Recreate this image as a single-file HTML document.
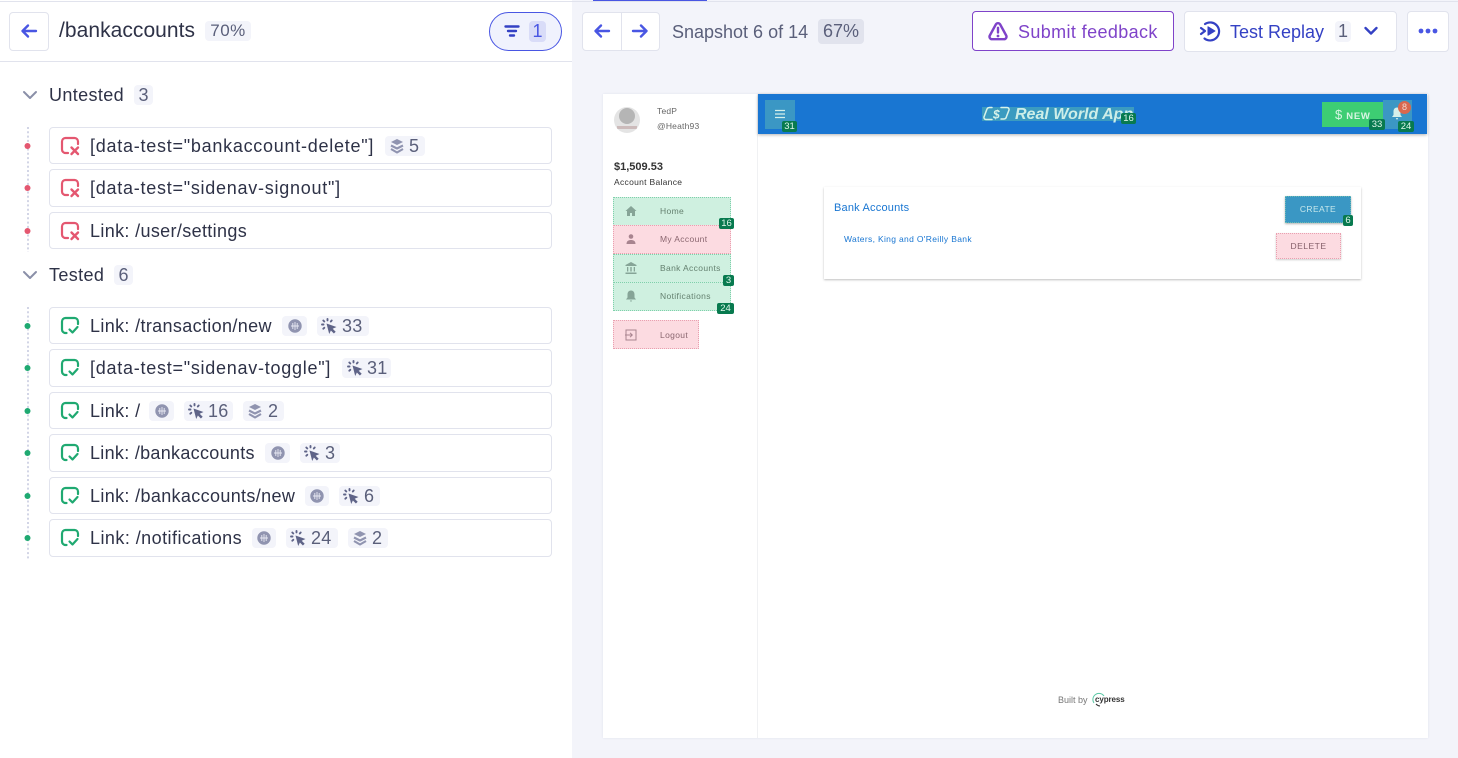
<!DOCTYPE html>
<html><head><meta charset="utf-8"><style>
html,body{margin:0;padding:0;width:1458px;height:758px;overflow:hidden;background:#fff;font-family:"Liberation Sans",sans-serif}
div,span,svg{position:absolute;box-sizing:border-box}
.t{white-space:nowrap;line-height:20px}
.row{left:49px;width:503px;border:1px solid #e1e3ed;border-radius:4px;background:#fff}
.rt{left:90px;font-size:18px;letter-spacing:.35px;color:#2e3247;white-space:nowrap;line-height:20px}
.br{letter-spacing:.74px}
.b{height:20px;background:#f3f4fa;border-radius:4px}
.bn{font-size:18px;color:#5a5f7a;line-height:20px;letter-spacing:.3px;white-space:nowrap;top:0}
.g{background:#087a4f;color:#dff7ea;font-size:9.500px;line-height:11px;height:11px;text-align:center;border-radius:2px;z-index:5}
.mi{left:613px;width:118px;border:1px dotted #7fd0ab;background:#cff0e0;font-size:8.500px;letter-spacing:.35px;color:#64806f;line-height:26px}
.mp{border-color:#e9a0b0;background:#fcdbe1;color:#8a666f}
.ml{left:46px;white-space:nowrap;top:0}
</style></head><body>
<svg width="0" height="0" style="position:absolute"><defs>
<symbol id="x" viewBox="0 0 20 20"><path d="M8 17H5.500A3.500 3.500 0 0 1 2 13.500V5.500A3.500 3.500 0 0 1 5.500 2h9A3.500 3.500 0 0 1 18 5.500V8" fill="none" stroke="#e45770" stroke-width="2.200" stroke-linecap="round"/><path d="M11.500 11.500l6.500 6.500M18 11.500L11.500 18" fill="none" stroke="#e45770" stroke-width="2.400" stroke-linecap="round"/></symbol>
<symbol id="c" viewBox="0 0 20 20"><path d="M6.500 17H5.500A3.500 3.500 0 0 1 2 13.500V5.500A3.500 3.500 0 0 1 5.500 2h9A3.500 3.500 0 0 1 18 5.500V8" fill="none" stroke="#1fa971" stroke-width="2.200" stroke-linecap="round"/><path d="M9.500 13.500l3 3 5-5.500" fill="none" stroke="#1fa971" stroke-width="2.200" stroke-linecap="round" stroke-linejoin="round"/></symbol>
<symbol id="gl" viewBox="0 0 14 14"><circle cx="7" cy="7" r="6.700" fill="#9094b0"/><path d="M3 7h8M7 3v8M4.800 4v6M9.200 4v6" stroke="#e8e9f3" stroke-width=".9" fill="none"/></symbol>
<symbol id="cu" viewBox="0 0 16 16"><path d="M5.500 5.500l10 3.500-3.800 1.700 3 3-1.800 1.800-3-3L8.200 16z" fill="#5f6488"/><path d="M6.500 1v1.400M2.300 2.500l1 1M10.700 2.500l-.9 1M1 6.500h1.500M2.300 10.700l1-.9" stroke="#5f6488" stroke-width="1.900" stroke-linecap="round" fill="none"/></symbol>
<symbol id="la" viewBox="0 0 14 16"><path d="M7 1l6 3-6 3-6-3z" fill="#9094b0"/><path d="M1 7.500l6 3 6-3M1 11l6 3.500 6-3.500" stroke="#9094b0" stroke-width="2.100" fill="none" stroke-linejoin="round"/></symbol>
</defs></svg>

<!-- LEFT -->
<div style="left:0;top:0;width:572px;height:758px;background:#fff"></div>
<div style="left:0;top:1px;width:1458px;height:1px;background:#e1e3ed"></div>
<div style="left:0;top:61px;width:572px;height:1px;background:#e1e3ed"></div>
<div style="left:9px;top:12px;width:40px;height:39px;border:1px solid #e1e3ed;border-radius:4px"></div>
<svg style="left:20px;top:22px" width="18" height="18" viewBox="0 0 18 18"><path d="M2.500 9H16M8 3.500L2.500 9 8 14.500" fill="none" stroke="#4956e3" stroke-width="2.400" stroke-linecap="round" stroke-linejoin="round"/></svg>
<div class="t" style="left:59px;top:21px;font-size:21px;letter-spacing:.05px;color:#2e3247">/bankaccounts</div>
<div style="left:205px;top:21px;width:46px;height:20px;background:#f3f4fa;border-radius:4px;font-size:17px;line-height:20px;color:#5a5f7a;text-align:center;letter-spacing:.5px">70%</div>
<div style="left:489px;top:12px;width:73px;height:39px;border:1px solid #4956e3;border-radius:20px;background:#f0f2fd"></div>
<svg style="left:504px;top:24px" width="16" height="14" viewBox="0 0 16 14"><path d="M1.500 2.500h13M4 7h8M6 11.500h4" stroke="#3441c4" stroke-width="2.400" stroke-linecap="round"/></svg>
<div style="left:529px;top:21px;width:17px;height:21px;background:#d9dcf8;border-radius:4px;font-size:18px;line-height:21px;color:#4956e3;text-align:center">1</div>

<svg style="left:22px;top:89px" width="16" height="12" viewBox="0 0 16 12"><path d="M2 3l6 6 6-6" fill="none" stroke="#8a8fa8" stroke-width="2" stroke-linecap="round" stroke-linejoin="round"/></svg>
<div class="t" style="left:49px;top:85px;font-size:18px;letter-spacing:.37px;color:#2e3247">Untested</div>
<div style="left:134px;top:85px;width:19px;height:20px;background:#f3f4fa;border-radius:4px;font-size:18px;line-height:20px;text-align:center;color:#5a5f7a">3</div>

<svg style="left:22px;top:269px" width="16" height="12" viewBox="0 0 16 12"><path d="M2 3l6 6 6-6" fill="none" stroke="#8a8fa8" stroke-width="2" stroke-linecap="round" stroke-linejoin="round"/></svg>
<div class="t" style="left:49px;top:265px;font-size:18px;letter-spacing:.37px;color:#2e3247">Tested</div>
<div style="left:114px;top:265px;width:19px;height:20px;background:#f3f4fa;border-radius:4px;font-size:18px;line-height:20px;text-align:center;color:#5a5f7a">6</div>

<svg style="left:20px;top:120px" width="16" height="445" viewBox="0 0 16 445">
<path d="M8 7V132M8 187V439" stroke="#c4c7dd" stroke-width="1.500" stroke-dasharray="2 2.300" fill="none"/>
<g fill="#e45770"><circle cx="7.500" cy="26" r="3"/><circle cx="7.500" cy="68" r="3"/><circle cx="7.500" cy="111" r="3"/></g>
<g fill="#1fa971"><circle cx="7.500" cy="206" r="3"/><circle cx="7.500" cy="248" r="3"/><circle cx="7.500" cy="291" r="3"/><circle cx="7.500" cy="333" r="3"/><circle cx="7.500" cy="376" r="3"/><circle cx="7.500" cy="418" r="3"/></g>
</svg>

<div class="row" style="top:127px;height:37px"></div>
<svg style="left:60px;top:136px" width="20" height="20"><use href="#x"/></svg>
<div class="rt br" style="top:136px">[data-test="bankaccount-delete"]</div>
<div class="b" style="left:385px;top:136px;width:40px"><svg style="left:5px;top:2px" width="14" height="16"><use href="#la"/></svg><span class="bn" style="left:24px">5</span></div>

<div class="row" style="top:169px;height:38px"></div>
<svg style="left:60px;top:178px" width="20" height="20"><use href="#x"/></svg>
<div class="rt br" style="top:178px">[data-test="sidenav-signout"]</div>

<div class="row" style="top:212px;height:37px"></div>
<svg style="left:60px;top:221px" width="20" height="20"><use href="#x"/></svg>
<div class="rt" style="top:221px">Link: /user/settings</div>

<div class="row" style="top:307px;height:37px"></div>
<svg style="left:60px;top:316px" width="20" height="20"><use href="#c"/></svg>
<div class="rt" style="top:316px">Link: /transaction/new</div>
<div class="b" style="left:282px;top:316px;width:25px"><svg style="left:6px;top:3px" width="14" height="14"><use href="#gl"/></svg></div>
<div class="b" style="left:317px;top:316px;width:52px"><svg style="left:4px;top:2px" width="16" height="16"><use href="#cu"/></svg><span class="bn" style="left:25px">33</span></div>

<div class="row" style="top:349px;height:38px"></div>
<svg style="left:60px;top:358px" width="20" height="20"><use href="#c"/></svg>
<div class="rt br" style="top:358px">[data-test="sidenav-toggle"]</div>
<div class="b" style="left:342px;top:358px;width:49px"><svg style="left:5px;top:2px" width="16" height="16"><use href="#cu"/></svg><span class="bn" style="left:25px">31</span></div>

<div class="row" style="top:392px;height:37px"></div>
<svg style="left:60px;top:401px" width="20" height="20"><use href="#c"/></svg>
<div class="rt" style="top:401px">Link: /</div>
<div class="b" style="left:149px;top:401px;width:25px"><svg style="left:6px;top:3px" width="14" height="14"><use href="#gl"/></svg></div>
<div class="b" style="left:184px;top:401px;width:49px"><svg style="left:4px;top:2px" width="16" height="16"><use href="#cu"/></svg><span class="bn" style="left:24px">16</span></div>
<div class="b" style="left:243px;top:401px;width:41px"><svg style="left:5px;top:2px" width="14" height="16"><use href="#la"/></svg><span class="bn" style="left:25px">2</span></div>

<div class="row" style="top:434px;height:38px"></div>
<svg style="left:60px;top:443px" width="20" height="20"><use href="#c"/></svg>
<div class="rt" style="top:443px;letter-spacing:.3px">Link: /bankaccounts</div>
<div class="b" style="left:265px;top:443px;width:25px"><svg style="left:6px;top:3px" width="14" height="14"><use href="#gl"/></svg></div>
<div class="b" style="left:300px;top:443px;width:40px"><svg style="left:4px;top:2px" width="16" height="16"><use href="#cu"/></svg><span class="bn" style="left:25px">3</span></div>

<div class="row" style="top:477px;height:37px"></div>
<svg style="left:60px;top:486px" width="20" height="20"><use href="#c"/></svg>
<div class="rt" style="top:486px">Link: /bankaccounts/new</div>
<div class="b" style="left:305px;top:486px;width:24px"><svg style="left:5px;top:3px" width="14" height="14"><use href="#gl"/></svg></div>
<div class="b" style="left:339px;top:486px;width:41px"><svg style="left:4px;top:2px" width="16" height="16"><use href="#cu"/></svg><span class="bn" style="left:25px">6</span></div>

<div class="row" style="top:519px;height:38px"></div>
<svg style="left:60px;top:528px" width="20" height="20"><use href="#c"/></svg>
<div class="rt" style="top:528px;letter-spacing:.45px">Link: /notifications</div>
<div class="b" style="left:252px;top:528px;width:24px"><svg style="left:5px;top:3px" width="14" height="14"><use href="#gl"/></svg></div>
<div class="b" style="left:286px;top:528px;width:52px"><svg style="left:4px;top:2px" width="16" height="16"><use href="#cu"/></svg><span class="bn" style="left:25px">24</span></div>
<div class="b" style="left:348px;top:528px;width:40px"><svg style="left:5px;top:2px" width="14" height="16"><use href="#la"/></svg><span class="bn" style="left:24px">2</span></div>

<!-- RIGHT -->
<div style="left:572px;top:0;width:886px;height:758px;background:#f3f4fa"></div>
<div style="left:572px;top:1px;width:886px;height:1px;background:#e1e3ed"></div>
<div style="left:593px;top:0;width:114px;height:1px;background:#4956e3"></div>

<div style="left:582px;top:12px;width:78px;height:39px;background:#fff;border:1px solid #e1e3ed;border-radius:4px"></div>
<div style="left:621px;top:12px;width:1px;height:39px;background:#e1e3ed"></div>
<svg style="left:593px;top:22px" width="18" height="18" viewBox="0 0 18 18"><path d="M2.500 9H16M8 3.500L2.500 9 8 14.500" fill="none" stroke="#4956e3" stroke-width="2.400" stroke-linecap="round" stroke-linejoin="round"/></svg>
<svg style="left:631px;top:22px" width="18" height="18" viewBox="0 0 18 18"><path d="M15.500 9H2M10 3.500l5.500 5.500-5.500 5.500" fill="none" stroke="#4956e3" stroke-width="2.400" stroke-linecap="round" stroke-linejoin="round"/></svg>
<div class="t" style="left:672px;top:22px;font-size:18px;color:#5a5f7a">Snapshot 6 of 14</div>
<div style="left:818px;top:19px;width:46px;height:25px;background:#e1e3ed;border-radius:4px;font-size:18px;line-height:25px;color:#5a5f7a;text-align:center">67%</div>

<div style="left:972px;top:11px;width:202px;height:40px;background:#fff;border:1px solid #7f43c9;border-radius:4px"></div>
<svg style="left:987px;top:21px" width="22" height="21" viewBox="0 0 22 21"><path d="M8.800 3.500a2.500 2.500 0 0 1 4.400 0l6 11a2.500 2.500 0 0 1-2.200 3.700H5a2.500 2.500 0 0 1-2.200-3.700z" fill="none" stroke="#7f43c9" stroke-width="2.400" stroke-linejoin="round"/><path d="M11 6.800v4.700" stroke="#7f43c9" stroke-width="2.400" stroke-linecap="round"/><circle cx="11" cy="15" r="1.400" fill="#7f43c9"/></svg>
<div class="t" style="left:1018px;top:22px;font-size:18px;letter-spacing:.38px;color:#7f43c9">Submit feedback</div>

<div style="left:1184px;top:11px;width:213px;height:41px;background:#fff;border:1px solid #e1e3ed;border-radius:4px"></div>
<svg style="left:1199px;top:20px" width="22" height="22" viewBox="0 0 22 22"><path d="M6 4a9 9 0 1 1 -.5 14.500" fill="none" stroke="#3441c4" stroke-width="2.200" stroke-linecap="round"/><path d="M2 8l4 3-4 3" fill="none" stroke="#3441c4" stroke-width="2.200" stroke-linecap="round" stroke-linejoin="round"/><path d="M9 6.800v8.400l7-4.200z" fill="#3441c4" stroke="#3441c4" stroke-width="1" stroke-linejoin="round"/></svg>
<div class="t" style="left:1230px;top:22px;font-size:18px;color:#3441c4">Test Replay</div>
<div style="left:1335px;top:21px;width:16px;height:21px;background:#f3f4fa;border-radius:4px;font-size:18px;line-height:21px;color:#5a5f7a;text-align:center">1</div>
<svg style="left:1363px;top:24px" width="16" height="14" viewBox="0 0 16 14"><path d="M2.500 4l5.500 5.500L13.500 4" fill="none" stroke="#3441c4" stroke-width="2.400" stroke-linecap="round" stroke-linejoin="round"/></svg>
<div style="left:1407px;top:11px;width:42px;height:41px;background:#fff;border:1px solid #e1e3ed;border-radius:4px"></div>
<svg style="left:1418px;top:28px" width="20" height="6" viewBox="0 0 20 6"><g fill="#4956e3"><circle cx="3" cy="3" r="2.400"/><circle cx="10" cy="3" r="2.400"/><circle cx="17" cy="3" r="2.400"/></g></svg>

<!-- snapshot -->
<div style="left:603px;top:94px;width:825px;height:644px;background:#fff;box-shadow:0 0 2px rgba(60,70,120,.1)"></div>
<div style="left:757px;top:94px;width:1px;height:644px;background:#f0f1f3"></div>

<div style="left:614px;top:107px;width:26px;height:26px;border-radius:50%;background:#e4e4e4;overflow:hidden"><div style="left:5px;top:1px;width:16px;height:16px;border-radius:50%;background:#b5b5b5"></div><div style="left:3px;top:19px;width:20px;height:3px;background:#cbb"></div></div>
<div class="t" style="left:657px;top:101px;font-size:8.500px;letter-spacing:.2px;color:#666">TedP</div>
<div class="t" style="left:657px;top:116px;font-size:8.500px;letter-spacing:.2px;color:#666">@Heath93</div>
<div class="t" style="left:614px;top:157px;font-size:11px;font-weight:bold;color:#333">$1,509.53</div>
<div class="t" style="left:614px;top:172px;font-size:8.500px;letter-spacing:.3px;color:#333">Account Balance</div>

<div class="mi" style="top:197px;height:29px"><span class="ml">Home</span></div>
<div class="mi mp" style="top:225px;height:29px"><span class="ml">My Account</span></div>
<div class="mi" style="top:254px;height:29px"><span class="ml">Bank Accounts</span></div>
<div class="mi" style="top:282px;height:29px"><span class="ml">Notifications</span></div>
<div class="mi mp" style="top:320px;height:29px;width:86px"><span class="ml" style="top:1px">Logout</span></div>

<svg style="left:624px;top:204px" width="14" height="14" viewBox="0 0 14 14"><path d="M7 2L1.500 7H3v5h3V9h2v3h3V7h1.500z" fill="#86a497"/></svg>
<svg style="left:624px;top:232px" width="14" height="14" viewBox="0 0 14 14"><circle cx="7" cy="4.500" r="2.300" fill="#a8848f"/><path d="M2.500 12c0-3 2-4 4.500-4s4.500 1 4.500 4z" fill="#a8848f"/></svg>
<svg style="left:624px;top:261px" width="14" height="14" viewBox="0 0 14 14"><path d="M7 1L1.500 4v1h11V4zM3 6v4.500h1.300V6zM6.300 6v4.500h1.400V6zM9.700 6v4.500H11V6zM1.500 11.500h11V13h-11z" fill="#86a497"/></svg>
<svg style="left:624px;top:289px" width="14" height="14" viewBox="0 0 14 14"><path d="M7 1.500c-2.500 0-3.500 2-3.500 4v3L2 10.500h10l-1.500-2v-3c0-2-1-4-3.500-4zM5.800 11.500h2.400L7 13z" fill="#86a497"/></svg>
<svg style="left:624px;top:328px" width="14" height="14" viewBox="0 0 14 14"><path d="M2 2h10v10H2zM1 7h7M6 4.800L8.300 7 6 9.200" fill="none" stroke="#a8848f" stroke-width="1"/></svg>

<div class="g" style="left:719px;top:218px;width:15px">16</div>
<div class="g" style="left:723px;top:275px;width:11px">3</div>
<div class="g" style="left:717px;top:303px;width:17px">24</div>

<div style="left:758px;top:94px;width:669px;height:40px;background:#1976d2;box-shadow:0 1px 3px rgba(0,0,0,.3)"></div>
<div style="left:765px;top:100px;width:30px;height:29px;background:#3b97c4"></div>
<svg style="left:774px;top:109px" width="12" height="10" viewBox="0 0 12 10"><path d="M1 1.500h10M1 5h10M1 8.500h10" stroke="#d5f0ea" stroke-width="1.200"/></svg>
<div class="g" style="left:782px;top:121px;width:15px">31</div>
<div style="left:982px;top:107px;width:152px;height:14px;background:#3b9bc0"></div>
<svg style="left:982px;top:105px" width="30" height="18" viewBox="0 0 30 18"><path d="M10 2.500H7.500a3 3 0 0 0-2.700 2L2 12a2 2 0 0 0 2 2.500h6M19 2.500h6a2 2 0 0 1 2 2.500l-2.500 6.500a3 3 0 0 1-2.700 2.500H19" fill="none" stroke="#d8f3ea" stroke-width="1.500" stroke-linecap="round"/><text x="11" y="13.500" font-size="12" font-style="italic" font-weight="bold" fill="#d8f3ea" font-family="Liberation Sans">$</text></svg>
<div class="t" style="left:1015px;top:104px;font-size:16px;font-style:italic;font-weight:bold;line-height:21px;color:#cdeee8">Real World App</div>
<div class="g" style="left:1121px;top:113px;width:15px">16</div>
<div style="left:1322px;top:102px;width:61px;height:25px;background:#3dcd73;color:#d9f5e3;font-size:9.500px;font-weight:bold;line-height:25px;letter-spacing:.7px;padding-left:13px;white-space:nowrap"><span style="font-size:13px;position:static;font-weight:normal">$</span> NEW</div>
<div class="g" style="left:1369px;top:119px;width:16px">33</div>
<div style="left:1383px;top:100px;width:29px;height:29px;background:#3b97c4"></div>
<svg style="left:1390px;top:106px" width="14" height="15" viewBox="0 0 14 15"><path d="M7 1.500c-2.500 0-3.500 2-3.500 4v3.500L2 11h10l-1.500-2V5.500c0-2-1-4-3.500-4zM5.800 12h2.400L7 14z" fill="#d5f0ea"/></svg>
<div style="left:1398px;top:101px;width:13px;height:13px;border-radius:50%;background:#d9684f;color:#f5d8cf;font-size:9px;line-height:13px;text-align:center">8</div>
<div class="g" style="left:1398px;top:121px;width:16px">24</div>

<div style="left:824px;top:187px;width:537px;height:92px;background:#fff;box-shadow:0 1px 2px rgba(0,0,0,.25)"></div>
<div class="t" style="left:834px;top:198px;font-size:11px;letter-spacing:.2px;color:#1976d2">Bank Accounts</div>
<div class="t" style="left:844px;top:229px;font-size:8.500px;letter-spacing:.33px;color:#1976d2">Waters, King and O'Reilly Bank</div>
<div style="left:1285px;top:196px;width:66px;height:27px;background:#3a97c4;border:1px dotted #6cbcb5;box-shadow:0 1px 2px rgba(0,0,0,.3);color:#c8e8ec;font-size:8.500px;line-height:25px;text-align:center;letter-spacing:.4px">CREATE</div>
<div class="g" style="left:1343px;top:215px;width:10px">6</div>
<div style="left:1276px;top:233px;width:65px;height:26px;background:#fcdbe1;border:1px dotted #e9a0b0;box-shadow:0 1px 2px rgba(0,0,0,.2);color:#85606a;font-size:8.500px;line-height:24px;text-align:center;letter-spacing:.5px">DELETE</div>

<div class="t" style="left:1058px;top:690px;font-size:9px;color:#777">Built by</div>
<svg style="left:1092px;top:692px" width="14" height="16" viewBox="0 0 14 16"><path d="M2 11A6 6 0 1 1 12 4" fill="none" stroke="#58c7a4" stroke-width="1"/><path d="M4 12a6 6 0 0 0 4 2" fill="none" stroke="#333" stroke-width="1"/></svg>
<div class="t" style="left:1095px;top:690px;font-size:8px;font-weight:bold;color:#333;letter-spacing:-.1px">cypress</div>
</body></html>
